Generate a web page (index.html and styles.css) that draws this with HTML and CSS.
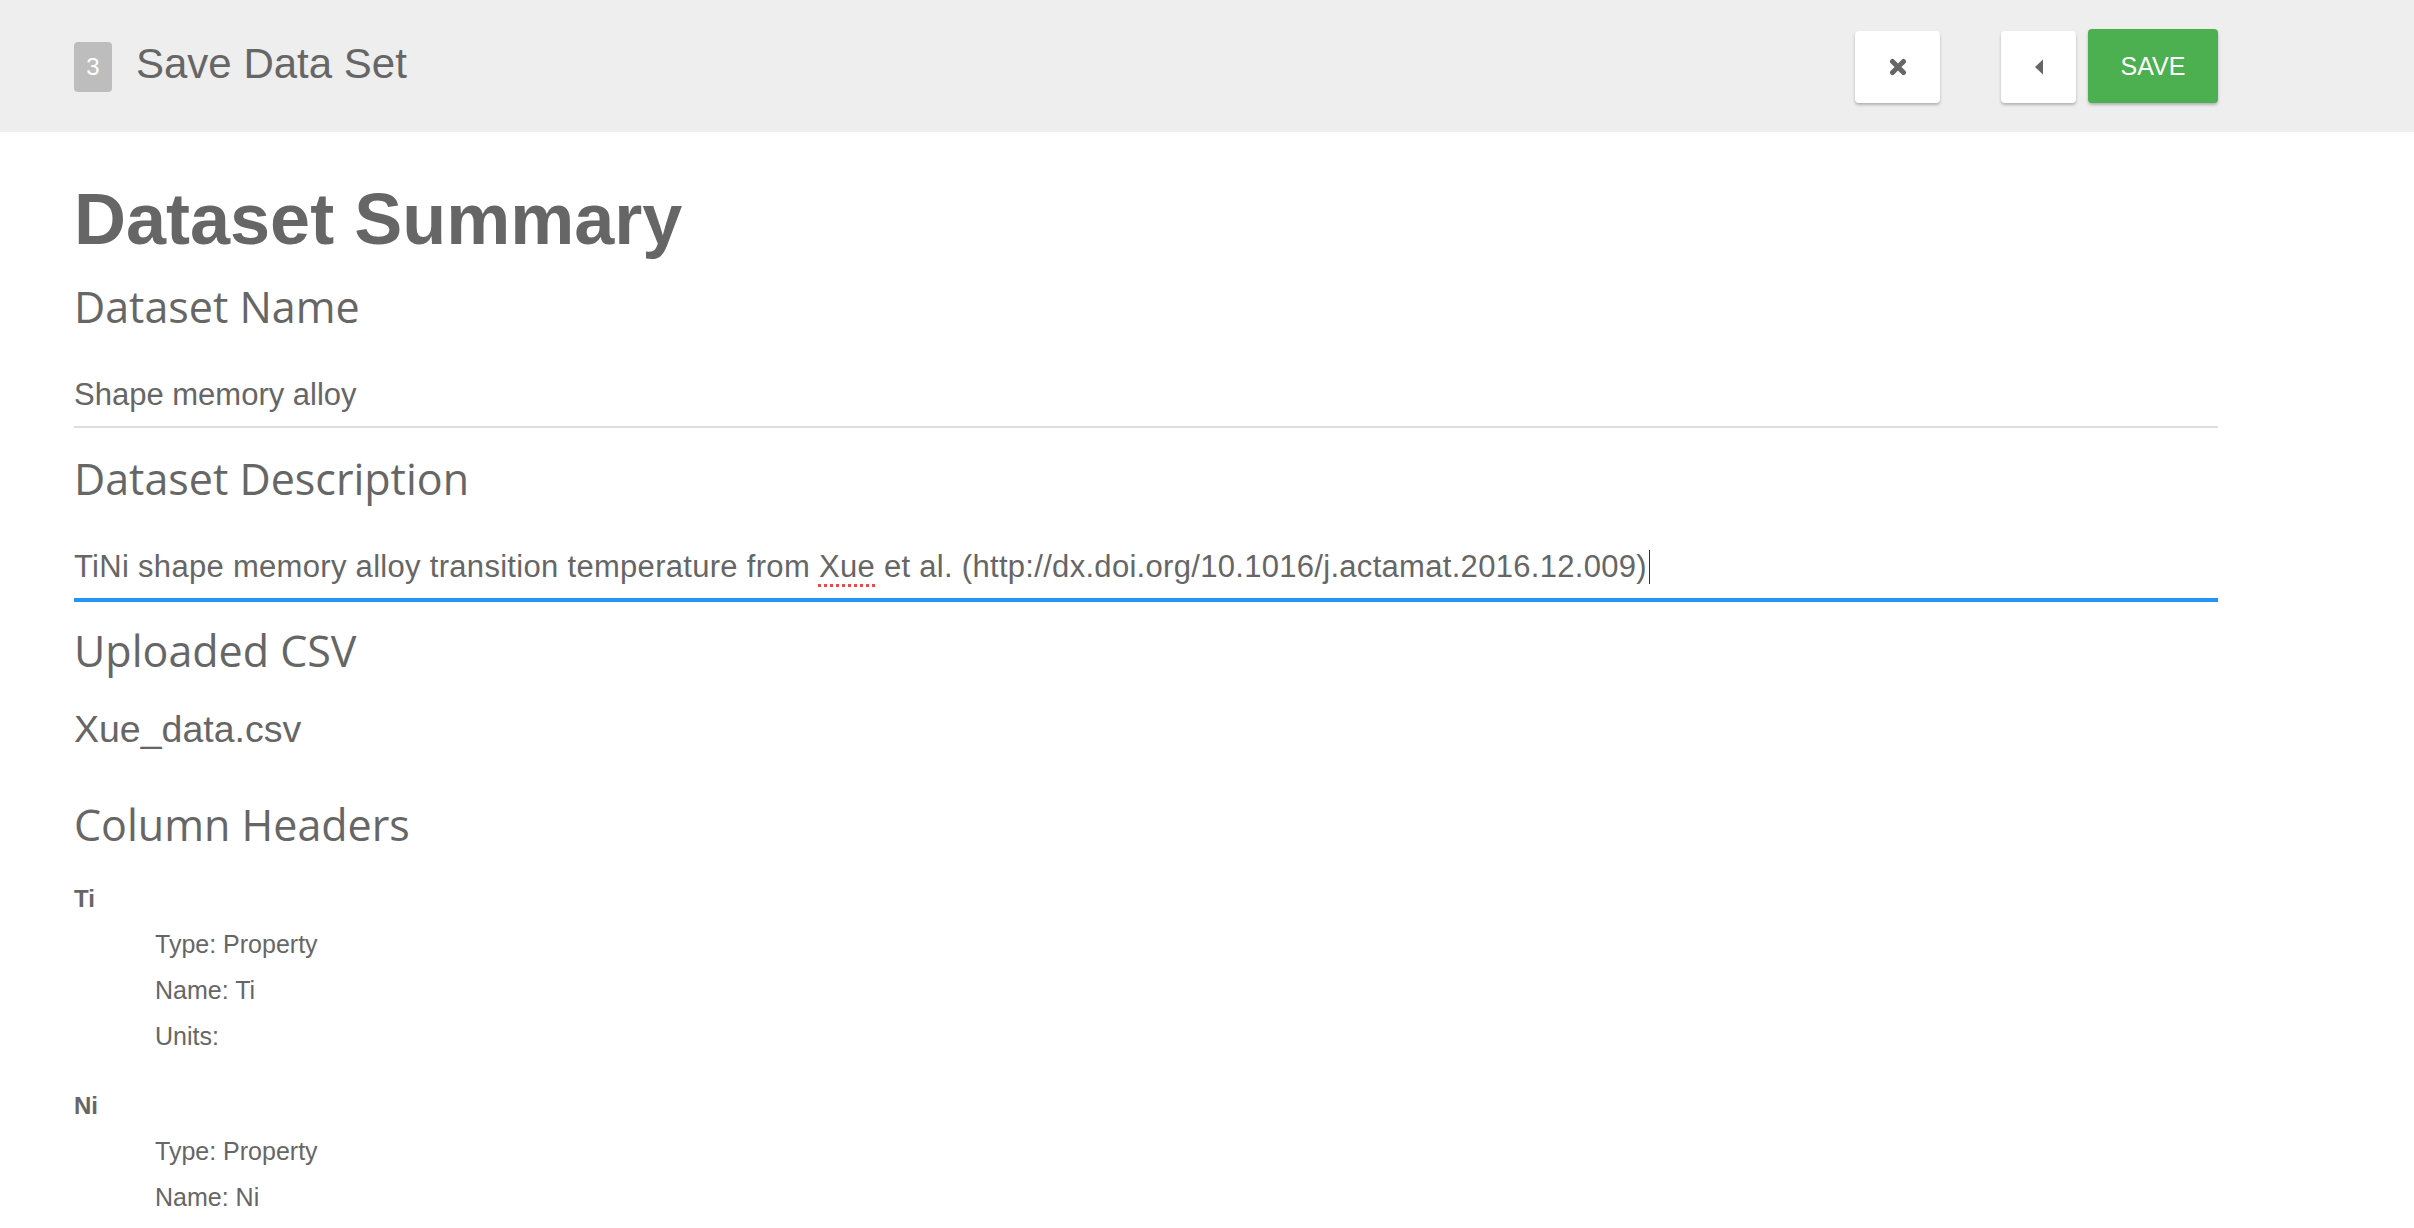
FILE: index.html
```html
<!DOCTYPE html>
<html lang="en">
<head>
<meta charset="utf-8">
<title>Save Data Set</title>
<link rel="stylesheet" href="styles.css">
</head>
<body>
<header class="topbar">
  <span class="step-badge">3</span>
  <span class="step-title">Save Data Set</span>
  <div class="spacer"></div>
  <button class="btn btn-white btn-close" aria-label="Close">
    <svg width="18" height="18" viewBox="0 0 18 18"><path d="M3.5 3.5 L14.5 14.5 M14.5 3.5 L3.5 14.5" stroke="#666" stroke-width="5" stroke-linecap="round" fill="none"/></svg>
  </button>
  <button class="btn btn-white btn-back" aria-label="Back">
    <svg width="10" height="16" viewBox="0 0 10 16"><path d="M9 0.5 L9 15.5 L1 8 Z" fill="#666"/></svg>
  </button>
  <button class="btn btn-save">SAVE</button>
</header>

<main class="content">
  <h1 class="page-title">Dataset Summary</h1>

  <h2 class="section-label">Dataset Name</h2>
  <div class="field">Shape memory alloy</div>

  <h2 class="section-label">Dataset Description</h2>
  <div class="field field-focused">TiNi shape memory alloy transition temperature from <span class="misspelled">Xue</span> et al. (http://dx.doi.org/10.1016/j.actamat.2016.12.009)<span class="caret"></span></div>

  <h2 class="section-label section-label-after-focus">Uploaded CSV</h2>
  <div class="file-name">Xue_data.csv</div>

  <h2 class="section-label section-label-spaced">Column Headers</h2>
  <div class="columns">
    <div class="column">
      <div class="column-name">Ti</div>
      <div class="column-prop">Type: Property</div>
      <div class="column-prop">Name: Ti</div>
      <div class="column-prop">Units:</div>
    </div>
    <div class="column">
      <div class="column-name">Ni</div>
      <div class="column-prop">Type: Property</div>
      <div class="column-prop">Name: Ni</div>
    </div>
  </div>
</main>
</body>
</html>
```

FILE: styles.css
```css
* {
  box-sizing: border-box;
}

html, body {
  margin: 0;
  padding: 0;
  background: #ffffff;
}

body {
  font-family: "Liberation Sans", Arial, sans-serif;
  color: #666666;
  overflow: hidden;
  height: 1228px;
}

.topbar {
  height: 132px;
  background: #eeeeee;
  display: flex;
  align-items: center;
  padding: 0 196px 0 74px;
}

.step-badge {
  width: 38px;
  height: 50px;
  border-radius: 4px;
  background: #bdbdbd;
  color: #ffffff;
  font-size: 24px;
  display: flex;
  align-items: center;
  justify-content: center;
  margin-top: 2px;
}

.step-title {
  margin-left: 24px;
  font-size: 42px;
  line-height: 50px;
  color: #666666;
  margin-top: -4px;
}

.spacer {
  flex: 1;
}

.btn {
  height: 72px;
  border: none;
  border-radius: 4px;
  display: flex;
  align-items: center;
  justify-content: center;
  padding: 0;
  font-family: "Liberation Sans", Arial, sans-serif;
  margin-top: 2px;
}

.btn-white {
  background: #ffffff;
  box-shadow: 0 2px 3px rgba(0, 0, 0, 0.25);
}

.btn-close {
  width: 85px;
  margin-right: 61px;
}

.btn-back {
  width: 75px;
  margin-right: 12px;
}

.btn-save {
  width: 130px;
  height: 74px;
  margin-top: 0;
  background: #4caf50;
  color: #ffffff;
  font-size: 25px;
  box-shadow: 0 2px 3px rgba(0, 0, 0, 0.25);
}

.content {
  padding-left: 74px;
  width: 2218px;
}

.page-title {
  margin: 51px 0 0 0;
  font-size: 72px;
  line-height: 73px;
  font-weight: bold;
  color: #666666;
}

.section-label {
  margin: 26px 0 0 0;
  font-family: "Open Sans", "Noto Sans", sans-serif;
  font-weight: 400;
  font-size: 43px;
  line-height: 50px;
  color: #666666;
}

.section-label-after-focus {
  margin-top: 24px;
}

.field {
  padding: 43px 0 11px 0;
  font-size: 31px;
  line-height: 40px;
  color: #666666;
  border-bottom: 2px solid #dddddd;
  white-space: nowrap;
}

.field-focused {
  border-bottom: 4px solid #2196f3;
  letter-spacing: 0.3px;
}

.misspelled {
  text-decoration-line: underline;
  text-decoration-style: dotted;
  text-decoration-color: #f04848;
  text-decoration-thickness: 3px;
  text-underline-offset: 7px;
}

.caret {
  display: inline-block;
  width: 1px;
  height: 34px;
  background: #333333;
  vertical-align: -7px;
  margin-left: 2px;
}

.file-name {
  margin-top: 31px;
  font-size: 37.5px;
  line-height: 44px;
  color: #666666;
}

.section-label-spaced {
  margin-top: 49px;
}

.columns {
  padding-top: 34px;
}

.column + .column {
  margin-top: 32px;
}

.column-name {
  font-size: 24px;
  line-height: 30px;
  font-weight: bold;
  color: #666666;
  margin-bottom: 7px;
}

.column-prop {
  padding-left: 81px;
  font-size: 25px;
  line-height: 46px;
  color: #666666;
}
```
